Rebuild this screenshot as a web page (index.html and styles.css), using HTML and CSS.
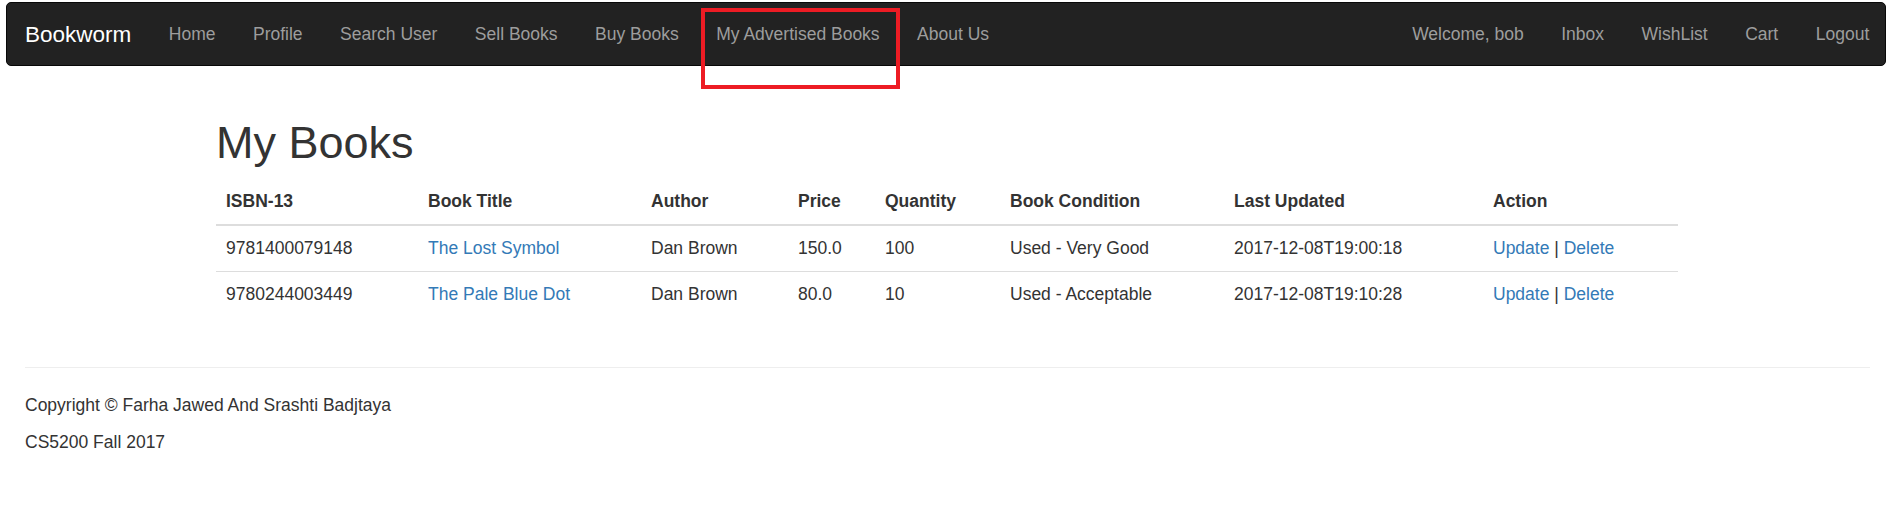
FILE: index.html
```html
<!DOCTYPE html>
<html lang="en">
<head>
<meta charset="utf-8">
<title>Bookworm - My Books</title>
<link rel="stylesheet" href="styles.css">
</head>
<body>
<nav class="navbar">
  <a class="brand" href="#">Bookworm</a>
  <ul class="nav">
    <li><a href="#">Home</a></li>
    <li><a href="#">Profile</a></li>
    <li><a href="#">Search User</a></li>
    <li><a href="#">Sell Books</a></li>
    <li><a href="#">Buy Books</a></li>
    <li class="marked"><a href="#">My Advertised Books</a><span class="highlight"></span></li>
    <li><a href="#">About Us</a></li>
  </ul>
  <ul class="nav nav-right">
    <li><a href="#">Welcome, bob</a></li>
    <li><a href="#">Inbox</a></li>
    <li><a href="#">WishList</a></li>
    <li><a href="#">Cart</a></li>
    <li><a href="#">Logout</a></li>
  </ul>
</nav>

<main class="container">
  <h1 class="title">My Books</h1>
  <table class="books">
    <colgroup>
      <col class="c-isbn"><col class="c-title"><col class="c-author"><col class="c-price">
      <col class="c-qty"><col class="c-cond"><col class="c-upd"><col class="c-act">
    </colgroup>
    <thead>
      <tr>
        <th>ISBN-13</th><th>Book Title</th><th>Author</th><th>Price</th>
        <th>Quantity</th><th>Book Condition</th><th>Last Updated</th><th>Action</th>
      </tr>
    </thead>
    <tbody>
      <tr>
        <td>9781400079148</td><td><a href="#">The Lost Symbol</a></td><td>Dan Brown</td><td>150.0</td>
        <td>100</td><td>Used - Very Good</td><td>2017-12-08T19:00:18</td>
        <td><a href="#">Update</a> | <a href="#">Delete</a></td>
      </tr>
      <tr>
        <td>9780244003449</td><td><a href="#">The Pale Blue Dot</a></td><td>Dan Brown</td><td>80.0</td>
        <td>10</td><td>Used - Acceptable</td><td>2017-12-08T19:10:28</td>
        <td><a href="#">Update</a> | <a href="#">Delete</a></td>
      </tr>
    </tbody>
  </table>
</main>

<footer class="footer">
  <hr class="rule">
  <p>Copyright &copy; Farha Jawed And Srashti Badjtaya</p>
  <p>CS5200 Fall 2017</p>
</footer>
</body>
</html>
```

FILE: styles.css
```css
html, body {
  margin: 0;
  padding: 0;
}

body {
  font-family: "Liberation Sans", Arial, Helvetica, sans-serif;
  font-size: 17.5px;
  line-height: 25px;
  color: #333;
  background: #fff;
}

a {
  color: #337ab7;
  text-decoration: none;
}

/* Navbar */
.navbar {
  display: flex;
  align-items: flex-start;
  box-sizing: border-box;
  height: 64px;
  margin: 2px 4px 25px 6px;
  background: #222;
  border: 1px solid #080808;
  border-radius: 5px;
}

.brand {
  display: block;
  font-size: 22.5px;
  line-height: 25px;
  padding: 18.75px 18.75px 18.75px 18px;
  color: #fff;
}

.nav {
  display: flex;
  list-style: none;
  margin: 0;
  padding: 0;
}

.nav li {
  display: block;
}

.nav a {
  display: block;
  padding: 18.5px 18.75px;
  line-height: 25px;
  color: #9d9d9d;
}

.nav-right {
  margin-left: auto;
  margin-right: -3px;
}

.marked {
  position: relative;
}

.highlight {
  position: absolute;
  left: 4px;
  top: 5px;
  width: 199px;
  height: 81px;
  box-sizing: border-box;
  border: 4.5px solid #ed1c24;
  pointer-events: none;
}

/* Content */
.container {
  display: flow-root;
  width: 1466px;
  box-sizing: border-box;
  padding-left: 4px;
  margin: 0 auto;
}

.title {
  font-size: 45px;
  line-height: 49.5px;
  font-weight: 500;
  margin: 27px 0 11px;
  color: #333;
}

.books {
  width: 100%;
  table-layout: fixed;
  border-collapse: collapse;
  margin-bottom: 25px;
}

.books th,
.books td {
  padding: 10px;
  text-align: left;
  vertical-align: top;
  line-height: 25px;
}

.books th {
  font-weight: bold;
  border-bottom: 2px solid #ddd;
}

.books td {
  border-top: 1px solid #ddd;
}

.c-isbn { width: 202px; }
.c-title { width: 223px; }
.c-author { width: 147px; }
.c-price { width: 87px; }
.c-qty { width: 125px; }
.c-cond { width: 224px; }
.c-upd { width: 259px; }
.c-act { width: 195px; }

/* Footer */
.footer {
  display: flow-root;
  padding: 0 20px 0 25px;
}

.rule {
  border: 0;
  border-top: 1px solid #eee;
  height: 0;
  margin: 25px 0;
}

.footer p {
  margin: 0 0 12.5px;
}
```
